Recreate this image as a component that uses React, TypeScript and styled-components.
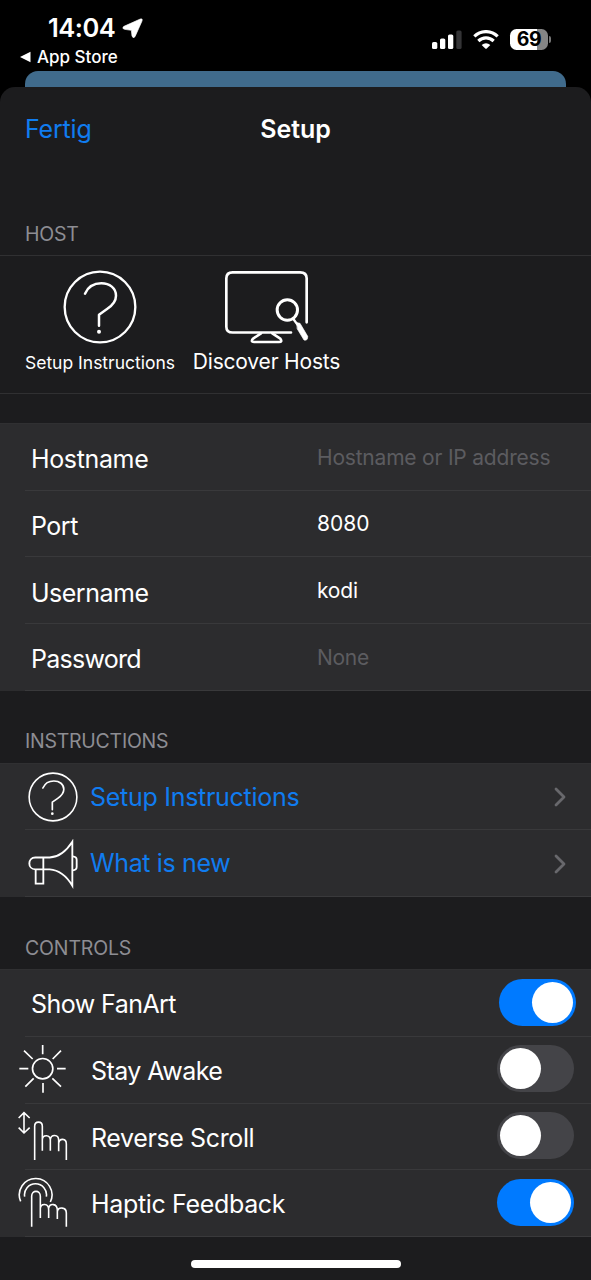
import React from 'react';
import styled, { createGlobalStyle } from 'styled-components';

const GlobalStyle = createGlobalStyle`
  * { box-sizing: border-box; }
  html, body { margin: 0; padding: 0; background: #000; }
  body { font-family: Inter, "Liberation Sans", sans-serif; color: #fff; }
  svg { display: block; flex: none; }
`;

const Screen = styled.div`
  width: 591px;
  height: 1280px;
  overflow: hidden;
  background: #000;
  display: flex;
  flex-direction: column;
`;

const Text = styled.span<{ $size: number; $track?: number; $weight?: number; $color?: string; $lift?: number; $drop?: number }>`
  font-size: ${p => p.$size}px;
  line-height: 1.2;
  letter-spacing: ${p => p.$track ?? 0}px;
  font-weight: ${p => p.$weight ?? 400};
  color: ${p => p.$color ?? '#fff'};
  padding-top: ${p => p.$drop ?? 0}px;
  padding-bottom: ${p => p.$lift ?? 0}px;
  white-space: nowrap;
`;

const StatusBar = styled.header`
  height: 71px;
  flex: none;
  display: flex;
  justify-content: space-between;
  padding: 12px 40px 0 20px;
`;

const StatusLeft = styled.div`
  display: flex;
  flex-direction: column;
`;

const Clock = styled.div`
  display: flex;
  align-items: center;
  gap: 7px;
  height: 32px;
  padding-left: 28px;
`;

const BackLink = styled.div`
  display: flex;
  align-items: center;
  gap: 6px;
  height: 26px;
`;

const StatusRight = styled.div`
  display: flex;
  align-items: center;
  height: 55px;
`;

const Peek = styled.div`
  height: 16px;
  flex: none;
  margin: 0 25px;
  border-radius: 13px 13px 0 0;
  background: #406b8c;
`;

const Sheet = styled.main`
  flex: 1;
  min-height: 0;
  border-radius: 15px 15px 0 0;
  background: #1c1c1e;
  display: flex;
  flex-direction: column;
`;

const NavBar = styled.nav`
  height: 84px;
  flex: none;
  display: grid;
  grid-template-columns: 1fr auto 1fr;
  align-items: center;
  padding: 0 25px;
`;

const SectionHeader = styled.h2<{ $height: number }>`
  height: ${p => p.$height}px;
  flex: none;
  margin: 0;
  padding: 0 25px 9px;
  display: flex;
  align-items: flex-end;
  line-height: 1;
`;

const HostActions = styled.section`
  height: 139px;
  flex: none;
  border-top: 1px solid #303032;
  border-bottom: 1px solid #303032;
  display: flex;
  gap: 18px;
  padding: 13.5px 25px 0;
`;

const Action = styled.div<{ $width: number }>`
  width: ${p => p.$width}px;
  display: flex;
  flex-direction: column;
  align-items: center;
`;

const ActionLabel = styled.div`
  height: 37px;
  display: flex;
  align-items: center;
`;

const Panel = styled.section<{ $gap?: number }>`
  flex: none;
  margin-top: ${p => p.$gap ?? 0}px;
  background: #2c2c2e;
  border-top: 1px solid #303032;
`;

const Row = styled.div<{ $columns: string; $left: number; $right?: number; $lift?: number }>`
  height: 66.7px;
  display: grid;
  grid-template-columns: ${p => p.$columns};
  align-items: center;
  padding: 0 ${p => p.$right ?? 15}px ${p => p.$lift ?? 0}px ${p => p.$left}px;
  background: linear-gradient(#39393b, #39393b) 25px 100% / 100% 1px no-repeat;
`;

const Toggle = styled.div<{ $on: boolean }>`
  width: 77.5px;
  height: 47px;
  border-radius: 24px;
  padding: 3px;
  display: flex;
  align-items: center;
  justify-content: ${p => (p.$on ? 'flex-end' : 'flex-start')};
  background: ${p => (p.$on ? '#007aff' : '#444448')};
`;

const Knob = styled.div`
  width: 41px;
  height: 41px;
  border-radius: 50%;
  background: #fff;
`;

const HomeIndicator = styled.div`
  width: 210px;
  height: 8px;
  flex: none;
  border-radius: 4px;
  margin: 23px 0 0 191px;
  background: #fff;
`;

const BLUE = '#107cf0';

const LocationIcon = () => (
  <svg width="21" height="21" viewBox="368 52 63 63">
    <path d="M374 77 L423 55 Q431 53 428 61 L407 108 Q401 115 398 106 L396 89 L376 86 Q366 83 374 77Z" fill="#fff" stroke="#fff" strokeWidth="2" />
  </svg>
);

const BackTriangle = () => (
  <svg width="11" height="12" viewBox="0 0 11 12">
    <path d="M0 6 L10.5 0.8 V11.2Z" fill="#fff" />
  </svg>
);

const SignalIcon = () => (
  <svg width="30" height="20" viewBox="0 0 30 20">
    <rect x="0" y="12" width="5.3" height="7" rx="1.6" fill="#fff" />
    <rect x="8" y="8.5" width="5.3" height="10.5" rx="1.6" fill="#fff" />
    <rect x="16" y="4.5" width="5.3" height="14.5" rx="1.6" fill="#fff" />
    <rect x="24.3" y="0.5" width="5.3" height="18.5" rx="1.6" fill="#343436" />
  </svg>
);

const WifiSvg = styled.svg`
  margin-left: 11px;
`;

const WifiIcon = () => (
  <WifiSvg width="26" height="20" viewBox="0 0 78 60">
    <g fill="none" stroke="#fff" strokeWidth="9.5">
      <path d="M4 19 A50 50 0 0 1 74 19" />
      <path d="M16 33 A33 33 0 0 1 62 33" />
    </g>
    <path d="M26 45 Q39 34 52 45 L42 55 Q39 58 36 55Z" fill="#fff" />
  </WifiSvg>
);

const Battery = styled.div`
  width: 38px;
  height: 21px;
  margin-left: 11px;
  border-radius: 6.5px;
  background: linear-gradient(90deg, #fff 27px, #858585 27px);
  display: flex;
  align-items: center;
  justify-content: center;
`;

const BatteryCap = styled.div`
  width: 2px;
  height: 7px;
  margin-left: 1px;
  border-radius: 0 2px 2px 0;
  background: #777;
`;

const QuestionIcon = ({ size }: { size: number }) => (
  <svg width={size} height={size} viewBox="190 179 222 222" fill="none" stroke="#fff" strokeLinecap="round" strokeLinejoin="round">
    <circle cx="301" cy="290" r="106" strokeWidth="7" />
    <path d="M256 250 C265 230 283 219 305 219 C330 219 349 233 349 256 C349 274 337 286 322 296 L298 313 V346" strokeWidth="7.5" />
    <circle cx="298" cy="364" r="6" fill="#fff" stroke="none" />
  </svg>
);

const DiscoverIcon = () => (
  <svg width="84" height="74" viewBox="45 28 252 222" fill="none" stroke="#fff" strokeWidth="8" strokeLinecap="round">
    <path d="M243 215.500 H68 Q49 215.500 49 198 V53 Q49 35 68 35 H270 Q290 35 290 53 V185" />
    <path d="M153 218 L129 234 Q121 244 132 244 H207 Q218 244 211 234 L187 218" />
    <circle cx="232" cy="148" r="30.500" strokeWidth="9" />
    <path d="M250 175 L264 194" strokeWidth="7" />
    <path d="M261 186 L270 188 L293 227 Q294 241 282 238 L262 205Z" fill="#fff" stroke="#fff" strokeWidth="2" />
  </svg>
);

const MegaphoneIcon = () => (
  <svg width="50" height="50" viewBox="85 356 150 150" fill="none" stroke="#fff" strokeWidth="5.500">
    <path d="M150 411.500 H107 C83 411.500 83 447 107 447 H150 C178 449 200 466 218 496 V364 C200 392 178 410 150 411.500Z" />
    <path d="M131 411 V490 H108 V447" />
    <path d="M219 408 Q231 409 231 418 V440 Q231 449 219 450" />
  </svg>
);

const SunIcon = () => (
  <svg width="50" height="50" viewBox="54 194 150 150" fill="none" stroke="#fff" strokeWidth="5">
    <circle cx="128" cy="268" r="30.500" />
    <path d="M128 197 V225 M129 311 V340 M58 268 H85 M171 268 H197 M72 214 L98 239 M183 214 L158 239 M76 322 L101 297 M183 322 L157 297" />
  </svg>
);

const ScrollHandIcon = () => (
  <svg width="50" height="50" viewBox="54 394 150 150" fill="none" stroke="#fff" strokeWidth="4.800">
    <path d="M104 541 V440 C104 423 127 423 127 440 V513 M127 480 C128 464 151 464 151 482 V513 M151 480 C153 463 176 463 176 482 V515 M176 491 C178 475 199 475 199 493 V541" />
    <path d="M72 400 V459 M56 415 L72 399 L89 415 M56 444 L72 460 L89 444" />
  </svg>
);

const HapticIcon = () => (
  <svg width="50" height="50" viewBox="54 592 150 150" fill="none" stroke="#fff" strokeWidth="4.800">
    <path d="M95 741 V650 C95 630 121 630 121 650 V715 M121 686 C123 670 146 670 146 690 V715 M146 686 C149 670 172 670 172 692 V718 M172 696 C174 681 199 681 199 700 V741" />
    <path d="M62 665 A49 49 0 1 1 151 667 M74 651 A33 33 0 1 1 139 651" />
  </svg>
);

const Chevron = () => (
  <svg width="12" height="20" viewBox="0 0 12 20" fill="none" stroke="#68686c" strokeWidth="2.800" strokeLinecap="round" strokeLinejoin="round">
    <path d="M2 2 L10 10 L2 18" />
  </svg>
);

const fields = [
  { label: 'Hostname', value: 'Hostname or IP address', filled: false, track: -0.36, vtrack: -0.2 },
  { label: 'Port', value: '8080', filled: true, track: -0.5, vtrack: 0 },
  { label: 'Username', value: 'kodi', filled: true, track: -0.5, vtrack: -0.2 },
  { label: 'Password', value: 'None', filled: false, track: -0.74, vtrack: -0.3 },
];

const switches = [
  { label: 'Stay Awake', icon: <SunIcon />, on: false, track: -0.55 },
  { label: 'Reverse Scroll', icon: <ScrollHandIcon />, on: false, track: -0.38 },
  { label: 'Haptic Feedback', icon: <HapticIcon />, on: true, track: -0.34 },
];

const Switch = ({ on }: { on: boolean }) => (
  <Toggle $on={on}>
    <Knob />
  </Toggle>
);

export default function App() {
  return (
    <Screen>
      <GlobalStyle />
      <StatusBar>
        <StatusLeft>
          <Clock>
            <Text $size={25.5} $weight={600} $track={-0.5}>14:04</Text>
            <LocationIcon />
          </Clock>
          <BackLink>
            <BackTriangle />
            <Text $size={17} $weight={500}>App Store</Text>
          </BackLink>
        </StatusLeft>
        <StatusRight>
          <SignalIcon />
          <WifiIcon />
          <Battery>
            <Text $size={19.5} $weight={700} $track={-0.3} $color="#000" $drop={1}>69</Text>
          </Battery>
          <BatteryCap />
        </StatusRight>
      </StatusBar>
      <Peek />
      <Sheet>
        <NavBar>
          <Text $size={25} $track={-0.2} $color={BLUE}>Fertig</Text>
          <Text $size={25} $weight={600} $track={-0.1}>Setup</Text>
        </NavBar>
        <SectionHeader $height={84}>
          <Text $size={19.5} $track={-0.25} $color="#8d8d93">HOST</Text>
        </SectionHeader>
        <HostActions>
          <Action $width={150}>
            <QuestionIcon size={74} />
            <ActionLabel><Text $size={17.5}>Setup Instructions</Text></ActionLabel>
          </Action>
          <Action $width={147}>
            <DiscoverIcon />
            <ActionLabel><Text $size={21} $track={-0.18} $lift={1}>Discover Hosts</Text></ActionLabel>
          </Action>
        </HostActions>
        <Panel $gap={29}>
          {fields.map(f => (
            <Row key={f.label} $columns="286px 1fr" $left={31}>
              <Text $size={25} $track={f.track} $drop={4}>{f.label}</Text>
              <Text $size={21} $track={f.vtrack} $color={f.filled ? '#fff' : '#5c5c60'}>{f.value}</Text>
            </Row>
          ))}
        </Panel>
        <SectionHeader $height={72}>
          <Text $size={19.5} $track={-0.25} $color="#8d8d93">INSTRUCTIONS</Text>
        </SectionHeader>
        <Panel>
          <Row $columns="62px 1fr auto" $left={28} $right={25}>
            <QuestionIcon size={50} />
            <Text $size={25} $track={-0.28} $color={BLUE} $lift={1}>Setup Instructions</Text>
            <Chevron />
          </Row>
          <Row $columns="62px 1fr auto" $left={28} $right={25}>
            <MegaphoneIcon />
            <Text $size={25} $track={-0.36} $color={BLUE} $lift={2}>What is new</Text>
            <Chevron />
          </Row>
        </Panel>
        <SectionHeader $height={72}>
          <Text $size={19.5} $track={-0.15} $color="#8d8d93">CONTROLS</Text>
        </SectionHeader>
        <Panel>
          <Row $columns="1fr auto" $left={31} $lift={2.5}>
            <Text $size={25} $track={-0.55} $drop={4}>Show FanArt</Text>
            <Switch on />
          </Row>
          {switches.map(s => (
            <Row key={s.label} $columns="73px 1fr auto" $left={18} $right={17} $lift={2.5}>
              {s.icon}
              <Text $size={25} $track={s.track} $drop={4}>{s.label}</Text>
              <Switch on={s.on} />
            </Row>
          ))}
        </Panel>
        <HomeIndicator />
      </Sheet>
    </Screen>
  );
}
